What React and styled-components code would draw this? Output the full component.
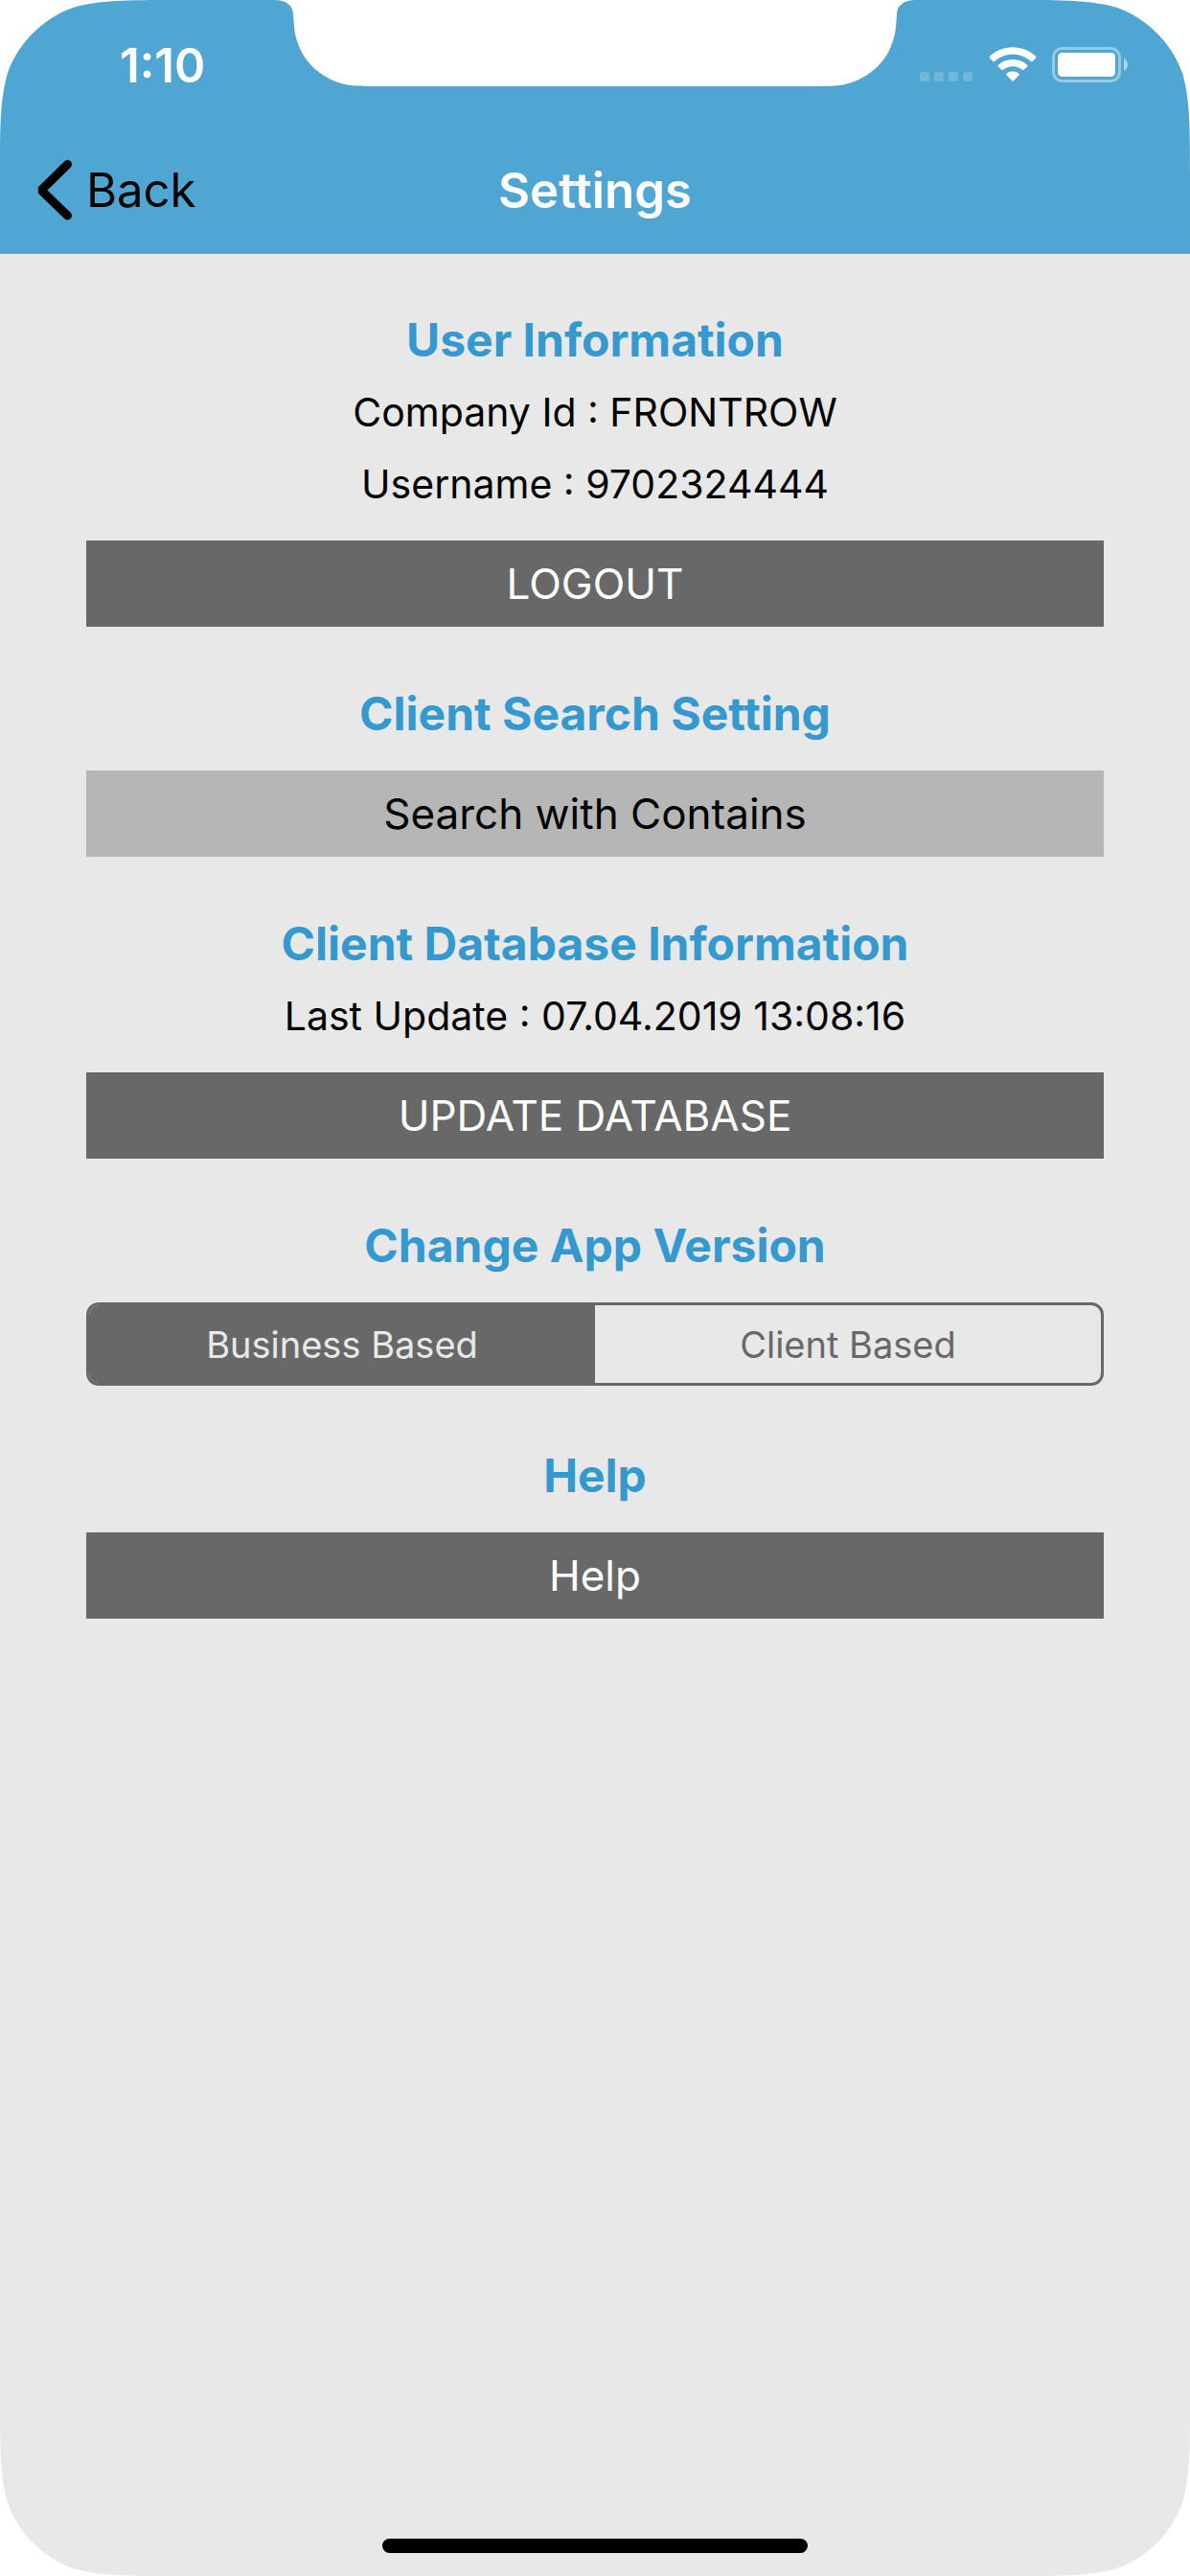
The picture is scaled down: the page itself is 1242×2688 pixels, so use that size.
import React, { useState } from "react";
import styled, { createGlobalStyle } from "styled-components";

const color = {
  bar: "#50a6d2",
  page: "#e8e8e8",
  heading: "#3399cf",
  dark: "#686868",
  light: "#b6b6b6",
};

const GlobalStyle = createGlobalStyle`
  *, *::before, *::after { box-sizing: border-box; }
  body {
    margin: 0;
    background: #fff;
    color: #000;
    font-family: Inter, Roboto, "Liberation Sans", sans-serif;
  }
  button, input { font: inherit; }
`;

const Screen = styled.div`
  position: relative;
  display: flex;
  flex-direction: column;
  min-height: 100vh;
  overflow: hidden;
  background: ${color.page};
`;

const Header = styled.header`
  background: ${color.bar};
  box-shadow: 0 1px 0 #97a0a3;
`;

const StatusBar = styled.div`
  display: flex;
  align-items: center;
  justify-content: space-between;
  height: 132px;
  padding: 4px 64px 0 125px;
  color: #fff;
`;

const Time = styled.time`
  font-size: 49px;
  font-weight: 600;
`;

const StatusIcons = styled.div`
  display: flex;
  align-items: center;
  gap: 16px;
`;

const NavBar = styled.nav`
  display: grid;
  grid-template-columns: 1fr auto 1fr;
  align-items: center;
  height: 132px;
  padding: 0 38px;
`;

const BackButton = styled.button`
  display: flex;
  align-items: center;
  justify-self: start;
  gap: 14px;
  padding: 0;
  border: 0;
  background: none;
  color: #000;
  font-size: 49px;
  cursor: pointer;
`;

const Title = styled.h1`
  margin: 0;
  color: #fff;
  font-size: 51px;
  font-weight: 600;
`;

const Content = styled.main`
  display: flex;
  flex-direction: column;
  flex: 1;
  padding: 0 90px;
`;

const Section = styled.section`
  display: flex;
  flex-direction: column;
  padding-top: 59px;
`;

const Heading = styled.h2`
  margin: 0 0 6px;
  color: ${color.heading};
  font-size: 48px;
  font-weight: 700;
  line-height: 64px;
  text-align: center;
`;

const Info = styled.p`
  margin: 0;
  font-size: 41px;
  line-height: 75px;
  text-align: center;
`;

const ActionButton = styled.button`
  height: 90px;
  margin-top: 21px;
  padding: 0;
  border: 0;
  border-radius: 0;
  background: ${(p) => (p.$light ? color.light : color.dark)};
  color: ${(p) => (p.$light ? "#000" : "#fff")};
  font-size: 44px;
  cursor: pointer;
`;

const Segments = styled.div`
  display: grid;
  grid-template-columns: 1fr 1fr;
  height: 87px;
  margin: 21px 0 3px;
  border: 3px solid ${color.dark};
  border-radius: 13px;
  overflow: hidden;
`;

const Segment = styled.label`
  position: relative;
  display: flex;
  align-items: center;
  justify-content: center;
  color: ${color.dark};
  font-size: 38px;
  cursor: pointer;

  &:has(input:checked) {
    background: ${color.dark};
    color: ${color.page};
  }
`;

const SegmentInput = styled.input`
  position: absolute;
  inset: 0;
  width: 100%;
  height: 100%;
  margin: 0;
  opacity: 0;
  cursor: pointer;
`;

const HomeIndicator = styled.div`
  align-self: center;
  width: 444px;
  height: 15px;
  margin: 24px 0;
  border-radius: 8px;
  background: #000;
`;

const NotchShape = styled.svg`
  position: absolute;
  top: 0;
  left: 50%;
  margin-left: -335px;
`;

const CornerShape = styled.svg`
  position: absolute;
  ${(p) => (p.$bottom ? "bottom: 0;" : "top: 0;")}
  ${(p) => (p.$right ? "right: 0;" : "left: 0;")}
  transform: scale(${(p) => (p.$right ? -1 : 1)}, ${(p) => (p.$bottom ? -1 : 1)});
  pointer-events: none;
`;

function Notch() {
  return (
    <NotchShape width="670" height="90" viewBox="0 0 670 90" aria-hidden="true">
      <path
        fill="#fff"
        d="M0 0H670C657 0 650 6 650 15C649 28 649 36 644 48C636 70 612 87 588 89.3C580 90 574 90 564 90H106C96 90 90 90 82 89.3C58 87 34 70 26 48C21 36 21 28 20 15C20 6 13 0 0 0Z"
      />
    </NotchShape>
  );
}

function Corner({ bottom, right }) {
  return (
    <CornerShape $bottom={bottom} $right={right} width="183" height="183" viewBox="0 0 183 183" aria-hidden="true">
      <path fill="#fff" d="M0 0H183C131 0 104 0 76 8C45 19 19 45 8 76C0 104 0 131 0 183Z" />
    </CornerShape>
  );
}

function SignalDots() {
  return (
    <svg width="56" height="38" viewBox="0 0 56 38" fill="#fff" fillOpacity="0.2" aria-hidden="true">
      {[0, 15, 30, 45].map((x) => (
        <rect key={x} x={x} y="26" width="10" height="10" rx="3" />
      ))}
    </svg>
  );
}

function WifiIcon() {
  return (
    <svg width="50" height="38" viewBox="0 0 50 38" fill="#fff" aria-hidden="true">
      <path d="M25 .3C34.200 .3 42.500 3.800 48.900 9.600Q50 10.700 49 11.700L45.700 15Q44.800 15.900 43.800 15C38.800 10.500 32.300 7.800 25 7.800S11.200 10.500 6.200 15Q5.200 15.900 4.300 15L1 11.700Q0 10.700 1.100 9.600C7.500 3.800 15.800 .3 25 .3Z" />
      <path d="M25 13C30.800 13 36.100 15.200 40.100 18.700Q41 19.600 40.100 20.500L36.700 23.800Q35.800 24.600 34.900 23.800C32.200 21.600 28.800 20.300 25 20.300S17.800 21.600 15.100 23.800Q14.200 24.600 13.300 23.800L9.900 20.500Q9 19.600 9.900 18.700C13.900 15.200 19.200 13 25 13Z" />
      <path d="M25 25.500C27.500 25.500 29.600 26.300 31.400 27.700Q32.400 28.600 31.400 29.600L25.900 35.200Q25 36.100 24.100 35.200L18.600 29.600Q17.600 28.600 18.600 27.700C20.400 26.300 22.500 25.500 25 25.500Z" />
    </svg>
  );
}

function BatteryIcon() {
  return (
    <svg width="80" height="38" viewBox="0 0 80 38" aria-hidden="true">
      <rect x="1.500" y="1.500" width="69" height="34" rx="9" fill="none" stroke="#fff" strokeOpacity="0.4" strokeWidth="3" />
      <rect x="6" y="6" width="60" height="25" rx="4.500" fill="#fff" />
      <path d="M75 12C77.500 13 79 15.600 79 18.500S77.500 24 75 25Z" fill="#fff" fillOpacity="0.5" />
    </svg>
  );
}

function BackIcon() {
  return (
    <svg width="38" height="64" viewBox="0 0 38 64" fill="none" stroke="#000" aria-hidden="true">
      <path d="M32.500 5.500L5 32.500L32.500 59" strokeWidth="9" strokeLinecap="round" strokeLinejoin="bevel" />
    </svg>
  );
}

const versions = ["Business Based", "Client Based"];

export default function App() {
  const [version, setVersion] = useState(versions[0]);

  return (
    <Screen>
      <GlobalStyle />
      <Header>
        <StatusBar>
          <Time>1:10</Time>
          <StatusIcons>
            <SignalDots />
            <WifiIcon />
            <BatteryIcon />
          </StatusIcons>
        </StatusBar>
        <NavBar>
          <BackButton type="button">
            <BackIcon />
            Back
          </BackButton>
          <Title>Settings</Title>
        </NavBar>
      </Header>

      <Content>
        <Section>
          <Heading>User Information</Heading>
          <Info>Company Id : FRONTROW</Info>
          <Info>Username : 9702324444</Info>
          <ActionButton type="button">LOGOUT</ActionButton>
        </Section>

        <Section>
          <Heading>Client Search Setting</Heading>
          <ActionButton type="button" $light>
            Search with Contains
          </ActionButton>
        </Section>

        <Section>
          <Heading>Client Database Information</Heading>
          <Info>Last Update : 07.04.2019 13:08:16</Info>
          <ActionButton type="button">UPDATE DATABASE</ActionButton>
        </Section>

        <Section>
          <Heading id="version-heading">Change App Version</Heading>
          <Segments role="radiogroup" aria-labelledby="version-heading">
            {versions.map((name) => (
              <Segment key={name}>
                <SegmentInput
                  type="radio"
                  name="version"
                  value={name}
                  checked={version === name}
                  onChange={() => setVersion(name)}
                />
                {name}
              </Segment>
            ))}
          </Segments>
        </Section>

        <Section>
          <Heading>Help</Heading>
          <ActionButton type="button">Help</ActionButton>
        </Section>
      </Content>

      <HomeIndicator />
      <Notch />
      <Corner />
      <Corner right />
      <Corner bottom />
      <Corner bottom right />
    </Screen>
  );
}
